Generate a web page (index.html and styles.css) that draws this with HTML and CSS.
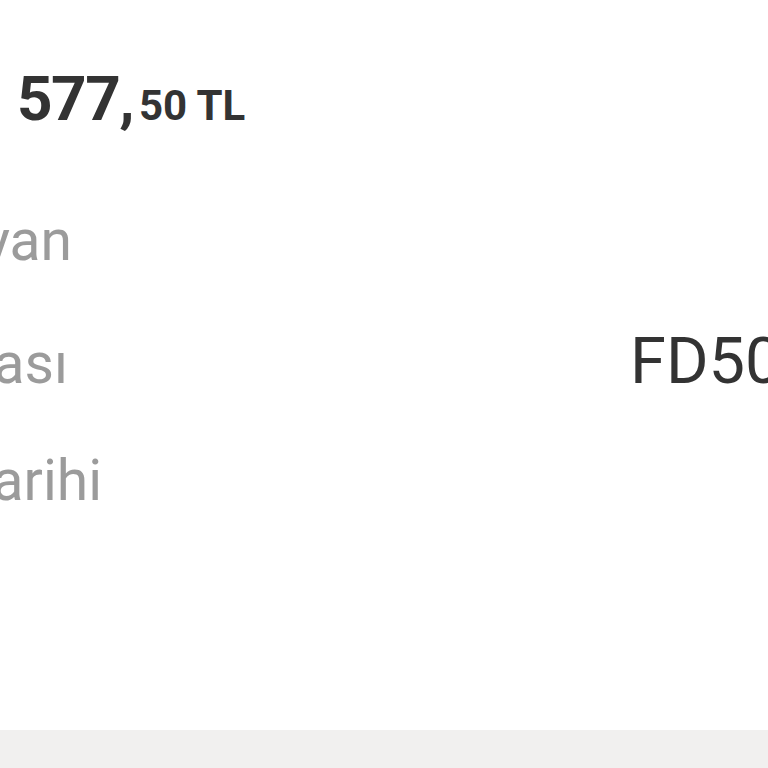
FILE: index.html
```html
<!DOCTYPE html>
<html lang="tr">
<head>
<meta charset="utf-8">
<link rel="stylesheet" href="styles.css">
</head>
<body>
<main class="card">
  <div class="price"><span class="int">577,</span><span class="dec">50 TL</span></div>
  <div class="rows">
    <div class="row"><span class="label"><span class="clip c1">Onaylayan</span></span><span class="value"></span></div>
    <div class="row"><span class="label"><span class="clip c2">Kupon Numarası</span></span><span class="value">FD5012837465</span></div>
    <div class="row"><span class="label"><span class="clip c3">Sipariş Tarihi</span></span><span class="value"></span></div>
  </div>
</main>
<footer class="band"></footer>
</body>
</html>
```
FILE: styles.css
```css
html, body {
  margin: 0;
  padding: 0;
  width: 768px;
  height: 768px;
  overflow: hidden;
  background: #ffffff;
  font-family: Roboto, "Noto Sans", sans-serif;
}
.card {
  height: 730px;
  display: flex;
  flex-direction: column;
  background: #ffffff;
}
.price {
  padding-left: 17px;
  margin-top: 61px;
  color: #333333;
  font-weight: 700;
  white-space: nowrap;
  font-size: 62px;
  line-height: 76px;
}
.price .int { letter-spacing: -1.5px; }
.price .dec { font-size: 42px; margin-left: 6px; }
.rows {
  margin-top: 37px;
  display: flex;
  flex-direction: column;
}
.row {
  height: 120px;
  display: grid;
  grid-template-columns: 630px 1fr;
  align-items: baseline;
  white-space: nowrap;
  line-height: 120px;
}
.label {
  display: flex;
  color: #9b9b9b;
  font-size: 57px;
}
.clip {
  display: flex;
  justify-content: flex-end;
}
.c1 { width: 72px; }
.c2 { width: 68px; }
.c3 { width: 102px; }
.value {
  color: #333333;
  font-size: 65px;
}
.band {
  height: 38px;
  background: #f1f0ef;
}
```
